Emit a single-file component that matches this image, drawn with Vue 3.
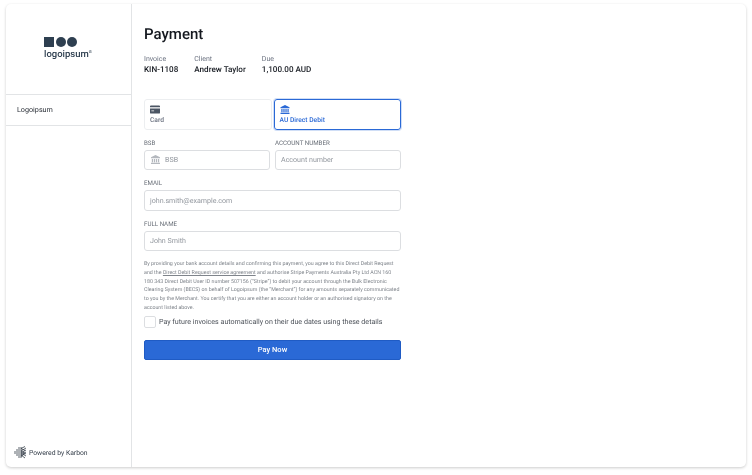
<script setup>
const meta = [
  { label: 'Invoice', value: 'KIN-1108' },
  { label: 'Client', value: 'Andrew Taylor' },
  { label: 'Due', value: '1,100.00 AUD' }
]
</script>

<template>
  <div class="page">
    <div class="card">
      <aside class="side">
        <div class="logo-box">
          <div class="logo">
            <div class="marks">
              <span class="sq"></span><span class="dot"></span><span class="dot"></span>
            </div>
            <div class="logo-text">logoipsum<sup>®</sup></div>
          </div>
        </div>
        <div class="org">Logoipsum</div>
        <div class="powered">
          <svg width="13" height="13" viewBox="0 0 13 13" fill="none" stroke="#333c48" stroke-width="0.8">
            <path d="M1 5v3M3 3v7M5 1v11M7 1v11M7 2.500l4-2M7 5l5-3M7 7l5-3M7 9l5-3M7 10.500l4-3M7 2.500l4 2M7 5l5 3M7 7l5 3M7 9l4 3"/>
          </svg>
          <span>Powered by Karbon</span>
        </div>
      </aside>
      <main class="main">
        <h1>Payment</h1>
        <div class="meta">
          <div v-for="m in meta" :key="m.label" class="meta-item">
            <div class="meta-label">{{ m.label }}</div>
            <div class="meta-value">{{ m.value }}</div>
          </div>
        </div>
        <form class="form" @submit.prevent>
          <div class="tabs">
            <div class="tab">
              <svg width="10" height="9" viewBox="0 0 11 9"><path fill="#4b5563" fill-rule="evenodd" d="M1 0h9a1 1 0 0 1 1 1v1H0V1a1 1 0 0 1 1-1zM0 3.500h11V8a1 1 0 0 1-1 1H1a1 1 0 0 1-1-1zM1.500 5.500v1h3v-1z"/></svg>
              <span>Card</span>
            </div>
            <div class="tab active">
              <svg width="10" height="10" viewBox="0 0 11 11"><path fill="#2a69d6" d="M5.500 0 11 2.700V4H0V2.700zM1 4.800h1.500v4H1zM3.500 4.800H5v4H3.500zM6 4.800h1.500v4H6zM8.500 4.800H10v4H8.500zM0 9.500h11V11H0z"/></svg>
              <span>AU Direct Debit</span>
            </div>
          </div>
          <div class="row">
            <label class="field">
              <span class="lbl">BSB</span>
              <span class="input">
                <svg width="9" height="9" viewBox="0 0 11 11"><path fill="#b4b8be" d="M5.500 0 11 2.700V4H0V2.700zM1 4.800h1.500v4H1zM3.500 4.800H5v4H3.500zM6 4.800h1.500v4H6zM8.500 4.800H10v4H8.500zM0 9.500h11V11H0z"/></svg>
                <span class="ph">BSB</span>
              </span>
            </label>
            <label class="field">
              <span class="lbl">ACCOUNT NUMBER</span>
              <span class="input"><span class="ph">Account number</span></span>
            </label>
          </div>
          <label class="field">
            <span class="lbl">EMAIL</span>
            <span class="input"><span class="ph">john.smith@example.com</span></span>
          </label>
          <label class="field">
            <span class="lbl">FULL NAME</span>
            <span class="input"><span class="ph">John Smith</span></span>
          </label>
          <p class="legal">By providing your bank account details and confirming this payment, you agree to this Direct Debit Request and the <u>Direct Debit Request service agreement</u> and authorise Stripe Payments Australia Pty Ltd ACN 160 180 343 Direct Debit User ID number 507156 (“Stripe”) to debit your account through the Bulk Electronic Clearing System (BECS) on behalf of Logoipsum (the “Merchant”) for any amounts separately communicated to you by the Merchant. You certify that you are either an account holder or an authorised signatory on the account listed above.</p>
          <div class="check">
            <span class="box"></span>
            <span>Pay future invoices automatically on their due dates using these details</span>
          </div>
          <button class="pay" type="button">Pay Now</button>
        </form>
      </main>
    </div>
  </div>
</template>

<style>
html, body { margin: 0; background: #fff; }
</style>

<style scoped>
.page {
  width: 752px;
  height: 475px;
  box-sizing: border-box;
  padding: 4px 6px 8px;
  font-family: Roboto, "Liberation Sans", sans-serif;
  color: #1a1f27;
  text-rendering: geometricPrecision;
  will-change: transform;
}
.card {
  height: 100%;
  display: flex;
  border-radius: 5px;
  box-shadow: 0 1px 3px rgba(0, 0, 0, 0.2);
}
.side {
  width: 126px;
  box-sizing: border-box;
  flex: none;
  display: flex;
  flex-direction: column;
  border-right: 1px solid #e2e4e6;
}
.logo-box {
  height: 90px;
  display: flex;
  align-items: center;
  justify-content: center;
  border-bottom: 1px solid #e2e4e6;
  padding-right: 1px;
}
.logo { display: flex; flex-direction: column; align-items: flex-start; }
.marks { display: flex; gap: 1px; align-items: center; }
.sq { width: 10px; height: 10px; background: #2e3f50; margin-right: 1px; }
.dot { width: 10px; height: 10px; border-radius: 50%; background: #2e3f50; }
.logo-text { font-size: 9.500px; font-weight: 500; color: #2e3f50; line-height: 12px; margin-top: 2px; }
.logo-text sup { font-size: 4px; line-height: 0; vertical-align: 4px; }
.org {
  height: 30px;
  line-height: 30px;
  padding-left: 11px;
  font-size: 7.200px;
  color: #2b3038;
  border-bottom: 1px solid #e2e4e6;
}
.powered {
  margin-top: auto;
  display: flex;
  align-items: center;
  gap: 2px;
  padding: 0 0 8px 8px;
  font-size: 6.800px;
  color: #333c48;
}
.main { flex: 1; padding: 20px 0 0 12px; }
h1 { margin: 0; font-size: 15px; font-weight: 500; line-height: 20px; color: #14181f; }
.meta { display: flex; gap: 16px; margin-top: 10px; }
.meta-label { font-size: 7px; line-height: 10px; color: #6b7280; }
.meta-value { font-size: 8.100px; line-height: 11px; font-weight: 500; color: #171b22; }
.form { width: 257px; margin-top: 24px; display: flex; flex-direction: column; }
.tabs { display: flex; gap: 2px; height: 30.500px; }
.tab {
  flex: 1;
  box-sizing: border-box;
  border: 1px solid #eceef0;
  border-radius: 3px;
  padding: 5px 5px 0;
  display: flex;
  flex-direction: column;
  gap: 2px;
  font-size: 6.700px;
  line-height: 9px;
  color: #6b7280;
  font-weight: 500;
}
.tab svg { display: block; height: 9px; }
.tab.active { border: 1px solid #2a69d6; box-shadow: 0 0 0 1px rgba(42, 105, 214, 0.22); color: #2a69d6; }
.row { display: flex; gap: 5px; margin-top: 9px; }
.row .field { flex: 1; margin-top: 0; }
.field { display: block; margin-top: 9px; min-width: 0; }
.lbl { display: block; font-size: 6.200px; line-height: 8px; color: #666c75; margin-bottom: 3px; }
.input {
  display: flex;
  align-items: center;
  gap: 5px;
  box-sizing: border-box;
  height: 20.500px;
  padding: 0 5px;
  border: 1px solid #dcdee1;
  border-radius: 3px;
  font-size: 7.100px;
  color: #92979e;
}
.input svg { margin-left: 1px; }
.legal { margin: 9px 0 0; font-size: 5.300px; line-height: 8.800px; color: #7f848b; }
.check { display: flex; align-items: center; gap: 3px; margin-top: 3px; font-size: 7.100px; color: #4b5058; height: 12px; }
.box { width: 10px; height: 10px; border: 1px solid #dcdee1; border-radius: 2px; flex: none; }
.pay {
  margin-top: 12px;
  height: 20px;
  border: 1px solid #1f5bc4;
  border-radius: 2px;
  background: #2a69d6;
  color: #fff;
  font: 500 7.500px Roboto, "Liberation Sans", sans-serif;
  padding: 0;
}
</style>
